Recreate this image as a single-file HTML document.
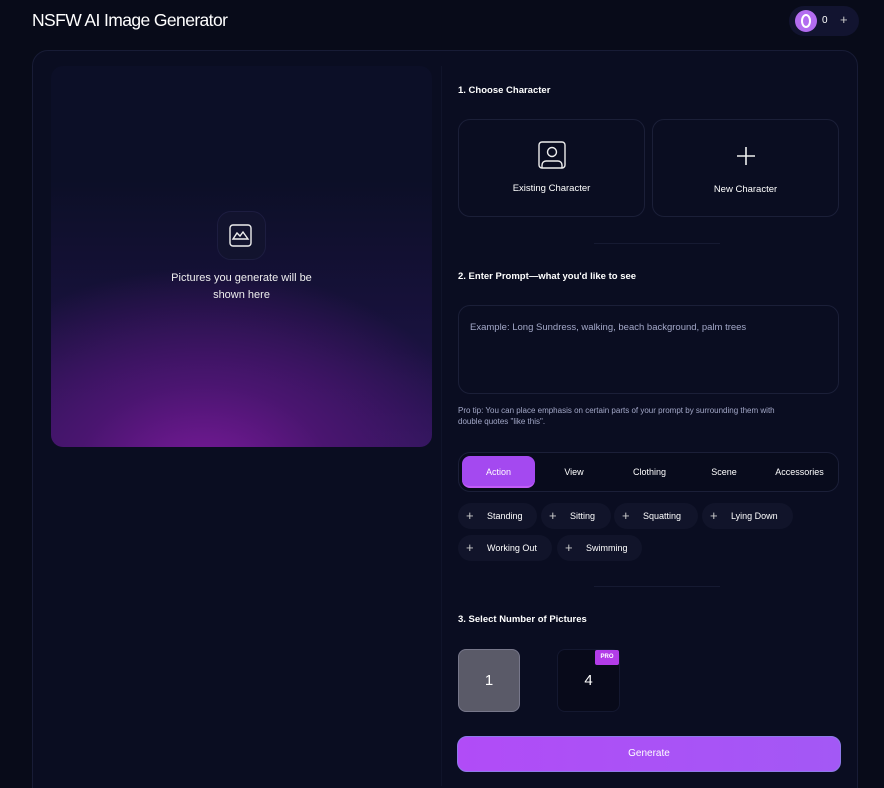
<!DOCTYPE html>
<html><head><style>
*{box-sizing:border-box;margin:0;padding:0}
html,body{width:884px;height:788px;overflow:hidden}
body{background:#080b19;font-family:"Liberation Sans",sans-serif;color:#fff;position:relative}
.abs{position:absolute}
.title{left:32px;top:10px;font-size:17.5px;letter-spacing:-0.6px;font-family:"Liberation Sans Narrow","Liberation Sans",sans-serif}
.coin{left:789px;top:6px;width:70px;height:30px;border-radius:15px;background:#121430}
.panel{left:32px;top:50px;width:826px;height:760px;border-radius:16px;background:#0a0d21;border:1px solid #181c36}
.prev{left:51px;top:66px;width:381px;height:381px;border-radius:12px;background:radial-gradient(ellipse 75% 55% at 40% 108%,#7b1a9c 0%,#4a1570 45%,rgba(20,16,50,0) 100%),linear-gradient(#0c0f27 30%,#1a1240 75%,#2a1658);}
.h{font-size:9.5px;font-weight:bold}
.card{border:1px solid #1b1f38;border-radius:12px;background:#0a0d21;font-size:9.5px;text-align:center}
.tab{font-size:9px;text-align:center;top:456px;height:32px;line-height:32px}
.chip{height:26px;border-radius:13px;background:#11142a;font-size:9px;line-height:26px;padding-left:29px}
.chip:before{content:"+";position:absolute;left:8px;top:0;font-size:13px;color:#ccc}
.sep{height:1px;background:#161a32}
</style></head><body>
<div class="abs title">NSFW AI Image Generator</div>
<div class="abs coin"><div class="abs" style="left:6px;top:4px;width:22px;height:22px;border-radius:50%;background:#b36cf0;"><div class="abs" style="left:6px;top:4px;width:10px;height:14px;border-radius:50%;border:2.5px solid #fff"></div></div><div class="abs" style="left:33px;top:9px;font-size:10px">0</div><div class="abs" style="left:51px;top:6px;font-size:13px;color:#ccc">+</div></div>
<div class="abs panel"></div>
<div class="abs" style="left:441px;top:66px;width:1px;height:720px;background:#10142a"></div>
<div class="abs prev"></div>
<div class="abs" style="left:217px;top:211px;width:49px;height:49px;border-radius:14px;background:#12132e;border:1px solid #1d1d40"></div>
<svg class="abs" style="left:229px;top:224px" width="23" height="23" viewBox="0 0 23 23" fill="none" stroke="#eee" stroke-width="1.4"><rect x="1" y="1" width="21" height="21" rx="3"/><path d="M4 15l4-6 3 3 3-4 5 7z"/></svg>
<div class="abs" style="left:51px;top:270px;width:381px;text-align:center;font-size:11px;line-height:17px;color:#eee">Pictures you generate will be<br>shown here</div>

<div class="abs h" style="left:458px;top:85px">1. Choose Character</div>
<div class="abs card" style="left:458px;top:119px;width:187px;height:98px"><svg style="margin-top:21px" width="28" height="28" viewBox="0 0 28 28" fill="none" stroke="#eee" stroke-width="1.4"><rect x="1" y="1" width="26" height="26" rx="3"/><circle cx="14" cy="11" r="4.5"/><path d="M4 27v-3a4 4 0 0 1 4-4h12a4 4 0 0 1 4 4v3"/></svg><div style="margin-top:11px">Existing Character</div></div>
<div class="abs card" style="left:652px;top:119px;width:187px;height:98px"><svg style="margin-top:26px" width="20" height="20" viewBox="0 0 20 20" stroke="#eee" stroke-width="1.6"><path d="M10 1v18M1 10h18"/></svg><div style="margin-top:15px">New Character</div></div>
<div class="abs sep" style="left:594px;top:243px;width:126px"></div>
<div class="abs h" style="left:458px;top:271px">2. Enter Prompt—what you'd like to see</div>
<div class="abs card" style="left:458px;top:305px;width:381px;height:89px;text-align:left;padding:16px 11px;color:#a3a8c8;font-size:9.5px">Example: Long Sundress, walking, beach background, palm trees</div>
<div class="abs" style="left:458px;top:405px;width:384px;font-size:8px;line-height:11px;color:#a3a8c8">Pro tip: You can place emphasis on certain parts of your prompt by surrounding them with<br>double quotes "like this".</div>
<div class="abs card" style="left:458px;top:452px;width:381px;height:40px;background:#080b1c"></div>
<div class="abs" style="left:462px;top:456px;width:73px;height:32px;border-radius:8px;background:#a449f0;border-bottom:2px solid #c15cf8"></div>
<div class="abs tab" style="left:462px;width:73px">Action</div>
<div class="abs tab" style="left:549px;width:50px">View</div>
<div class="abs tab" style="left:622px;width:55px">Clothing</div>
<div class="abs tab" style="left:700px;width:48px">Scene</div>
<div class="abs tab" style="left:768px;width:63px">Accessories</div>
<div class="abs chip" style="left:458px;top:503px;width:79px">Standing</div>
<div class="abs chip" style="left:541px;top:503px;width:70px">Sitting</div>
<div class="abs chip" style="left:614px;top:503px;width:84px">Squatting</div>
<div class="abs chip" style="left:702px;top:503px;width:91px">Lying Down</div>
<div class="abs chip" style="left:458px;top:535px;width:94px">Working Out</div>
<div class="abs chip" style="left:557px;top:535px;width:85px">Swimming</div>
<div class="abs sep" style="left:594px;top:586px;width:126px"></div>
<div class="abs h" style="left:458px;top:614px">3. Select Number of Pictures</div>
<div class="abs" style="left:458px;top:649px;width:62px;height:63px;border-radius:8px;background:#5a5a68;border:1px solid #77778a;text-align:center;line-height:61px;font-size:15px">1</div>
<div class="abs" style="left:557px;top:649px;width:63px;height:63px;border-radius:8px;background:#080a1a;border:1px solid #141830;text-align:center;line-height:61px;font-size:15px">4</div>
<div class="abs" style="left:595px;top:650px;width:24px;height:15px;background:#b33ce8;border-radius:2px;font-size:6px;font-weight:bold;text-align:center;line-height:15px">PRO</div>
<div class="abs" style="left:457px;top:736px;width:384px;height:36px;border-radius:10px;background:linear-gradient(90deg,#b14cf7,#a358f5);border:1px solid #8d7ae8;text-align:center;line-height:34px;font-size:10px">Generate</div>
</body></html>
